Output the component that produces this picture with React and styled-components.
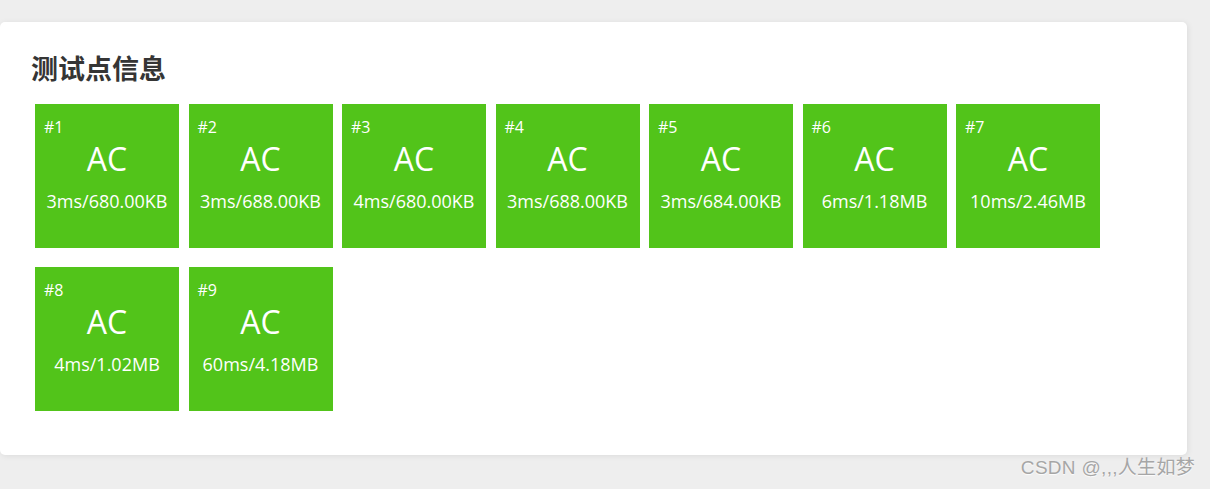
import React from "react";
import styled, { createGlobalStyle } from "styled-components";

const Global = createGlobalStyle`
  html, body {
    margin: 0;
    padding: 0;
    background: #eeeeee;
    font-family: "Open Sans", "Noto Sans CJK SC", sans-serif;
  }
  #root { position: relative; width: 1210px; height: 489px; overflow: hidden; }
`;

const Page = styled.div`
  padding-top: 22px;
`;

const Card = styled.section`
  width: 1187px;
  height: 433px;
  box-sizing: border-box;
  background: #ffffff;
  border-radius: 5px;
  box-shadow: 1px 1px 6px rgba(0, 0, 0, 0.08);
  padding: 28px 30px 0 31px;
`;

const Title = styled.h2`
  margin: 0;
  font-family: "Noto Sans CJK SC", sans-serif;
  font-size: 27px;
  line-height: 36px;
  font-weight: 700;
  color: #353535;
`;

const Grid = styled.div`
  display: flex;
  flex-wrap: wrap;
  column-gap: 9.5px;
  row-gap: 19px;
  margin: 18px 0 0 4px;
`;

const Tile = styled.div`
  width: 144px;
  height: 144px;
  box-sizing: border-box;
  background: ${(p) => p.$color};
  color: #ffffff;
  display: flex;
  flex-direction: column;
  align-items: center;
  padding-top: 12px;
`;

const Index = styled.div`
  align-self: flex-start;
  padding-left: 9px;
  font-size: 16px;
  line-height: 22px;
`;

const Status = styled.div`
  font-size: 32px;
  line-height: 36px;
  margin-top: 3px;
`;

const Stats = styled.div`
  font-size: 18px;
  line-height: 22px;
  margin-top: 13px;
  white-space: nowrap;
`;

const Watermark = styled.div`
  position: absolute;
  right: 15px;
  top: 456px;
  font-family: "Liberation Sans", "Noto Sans CJK SC", sans-serif;
  font-size: 19px;
  line-height: 24px;
  letter-spacing: 0.3px;
  color: #a6a6a6;
  text-shadow: 0 1px 1px rgba(255, 255, 255, 0.9);
`;

const cases = [
  "3ms/680.00KB",
  "3ms/688.00KB",
  "4ms/680.00KB",
  "3ms/688.00KB",
  "3ms/684.00KB",
  "6ms/1.18MB",
  "10ms/2.46MB",
  "4ms/1.02MB",
  "60ms/4.18MB",
];

export default function App() {
  return (
    <>
      <Global />
      <Page>
        <Card>
          <Title>测试点信息</Title>
          <Grid>
            {cases.map((s, i) => (
              <Tile key={i} $color="#52c41a">
                <Index>#{i + 1}</Index>
                <Status>AC</Status>
                <Stats>{s}</Stats>
              </Tile>
            ))}
          </Grid>
        </Card>
      </Page>
      <Watermark>CSDN @,,,人生如梦</Watermark>
    </>
  );
}
